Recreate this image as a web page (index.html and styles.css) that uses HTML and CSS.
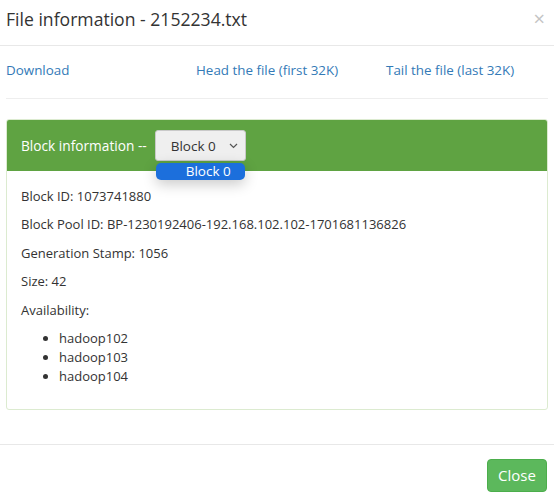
FILE: index.html
```html
<!DOCTYPE html>
<html>
<head>
<meta charset="utf-8">
<link rel="stylesheet" href="styles.css">
</head>
<body>
<div class="modal">
  <div class="modal-header">
    <h4 class="modal-title">File information - 2152234.txt</h4>
    <span class="close">×</span>
  </div>
  <div class="modal-body">
    <div class="links">
      <a href="#">Download</a>
      <a href="#">Head the file (first 32K)</a>
      <a href="#">Tail the file (last 32K)</a>
    </div>
    <hr class="sep">
    <div class="panel">
      <div class="panel-heading">
        <span class="panel-title">Block information --</span>
        <div class="select-wrap">
          <div class="select">
            <span>Block 0</span>
            <svg class="chev" width="9" height="6" viewBox="0 0 9 6"><path d="M1 1 L4.5 4.5 L8 1" fill="none" stroke="#555" stroke-width="1.2"/></svg>
          </div>
          <div class="dropdown"><span>Block 0</span></div>
        </div>
      </div>
      <div class="panel-body">
        <p>Block ID: 1073741880</p>
        <p>Block Pool ID: BP-1230192406-192.168.102.102-1701681136826</p>
        <p>Generation Stamp: 1056</p>
        <p>Size: 42</p>
        <p>Availability:</p>
        <ul>
          <li>hadoop102</li>
          <li>hadoop103</li>
          <li>hadoop104</li>
        </ul>
      </div>
    </div>
  </div>
  <div class="modal-footer">
    <button class="btn-close">Close</button>
  </div>
</div>
</body>
</html>
```
FILE: styles.css
```css
html, body {
  margin: 0;
  padding: 0;
  background: #fff;
}
body {
  font-family: "Open Sans", "Noto Sans", sans-serif;
  font-size: 13px;
  color: #333;
}
.modal {
  width: 554px;
}
.modal-header {
  height: 46px;
  border-bottom: 1px solid #e8e8e8;
  display: flex;
  align-items: center;
  justify-content: space-between;
  padding: 0 9px 7px 6px;
  box-sizing: border-box;
}
.modal-title {
  margin: 0;
  font-size: 17.6px;
  font-weight: normal;
  color: #333;
}
.close {
  font-size: 20px;
  color: #c4c4c4;
  line-height: 1;
}
.modal-body {
  padding: 0 6px;
}
.links {
  display: grid;
  grid-template-columns: 190px 190px 1fr;
  padding-top: 14px;
  height: 21px;
  line-height: 21px;
  font-size: 13.4px;
}
.links a {
  color: #337ab7;
  text-decoration: none;
}
.sep {
  border: 0;
  border-top: 1px solid #eee;
  margin: 17px 0 20px;
}
.panel {
  border: 1px solid #dcebd0;
  border-radius: 3px;
}
.panel-heading {
  background: #5fa342;
  height: 51px;
  display: flex;
  align-items: center;
  padding: 0 14px;
  gap: 8px;
  color: #fff;
  border-radius: 2px 2px 0 0;
}
.panel-title {
  font-size: 13.7px;
}
.select-wrap {
  position: relative;
}
.select {
  width: 91px;
  height: 31px;
  box-sizing: border-box;
  border: 1px solid #c9c9c9;
  border-radius: 3px;
  background: #efefef;
  color: #333;
  font-size: 13.5px;
  display: flex;
  align-items: center;
  padding: 0 7px 0 15px;
  justify-content: space-between;
}
.dropdown {
  position: absolute;
  left: 1px;
  top: 33px;
  width: 89px;
  height: 17px;
  background: #1c6fdc;
  border-radius: 5px;
  color: #fff;
  font-size: 13.5px;
  line-height: 17px;
  box-shadow: 0 4px 14px rgba(0,0,0,0.22);
  box-sizing: border-box;
  padding-left: 30px;
  z-index: 2;
}
.panel-body {
  padding: 15.5px 14px 12.5px 14px;
}
.panel-body p {
  margin: 0 0 9.6px;
  line-height: 19px;
}
.panel-body ul {
  margin: 0 0 10px;
  padding-left: 38px;
  line-height: 19px;
}
.modal-footer {
  margin-top: 34px;
  border-top: 1px solid #e8e8e8;
  padding: 14px 7px 10px;
  display: flex;
  justify-content: flex-end;
}
.btn-close {
  font-family: inherit;
  font-size: 15px;
  color: #fff;
  background: #5cb85c;
  border: 1px solid #4cae4c;
  border-radius: 4px;
  width: 60px;
  height: 33px;
  padding: 0;
}
```
